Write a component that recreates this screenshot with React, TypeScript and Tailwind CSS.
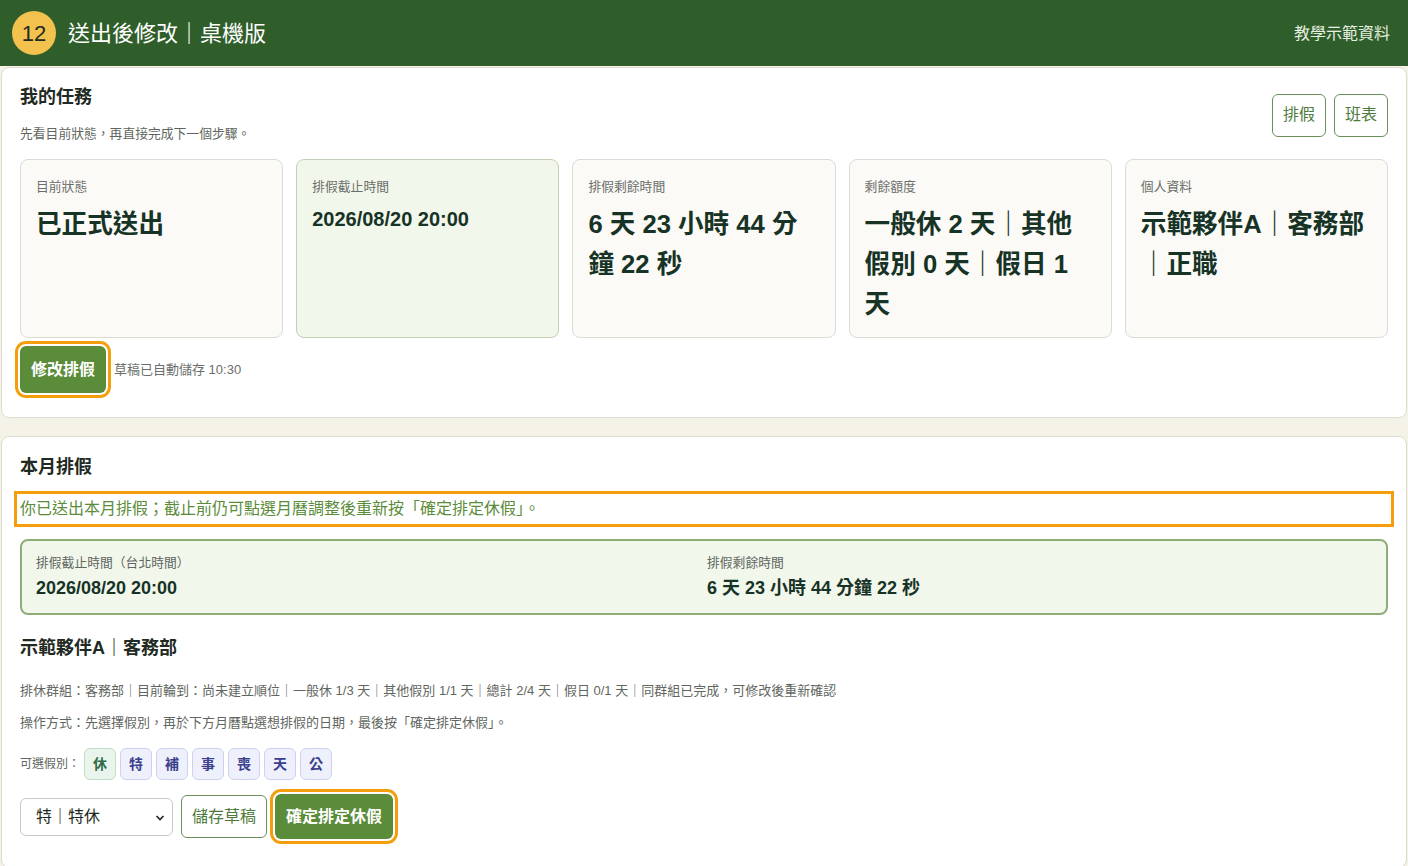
import React from 'react';

const font = { fontFamily: '"Liberation Sans", "Noto Sans CJK TC", sans-serif' };

const cards = [
  { label: '目前狀態', value: '已正式送出', hl: false, size: 'mt-[9px] text-[25.6px] leading-[40px]' },
  { label: '排假截止時間', value: '2026/08/20 20:00', hl: true, size: 'mt-[8px] text-[20px] leading-[32px]' },
  { label: '排假剩餘時間', value: '6 天 23 小時 44 分鐘 22 秒', hl: false, size: 'mt-[9px] text-[25.6px] leading-[40px]' },
  { label: '剩餘額度', value: '一般休 2 天｜其他假別 0 天｜假日 1 天', hl: false, size: 'mt-[9px] text-[25.6px] leading-[40px]' },
  { label: '個人資料', value: '示範夥伴A｜客務部｜正職', hl: false, size: 'mt-[9px] text-[25.6px] leading-[40px]' },
];

const leaveTypes = ['休', '特', '補', '事', '喪', '天', '公'];

export default function App() {
  return (
    <div className="min-h-[866px] bg-[#f5f3e8] text-[#1f2a22]" style={font}>
      {/* header */}
      <header className="h-[66px] bg-[#2f5e2b] flex items-center justify-between pl-3 pr-[18px]">
        <div className="flex items-center gap-3">
          <div className="w-11 h-11 rounded-full bg-[#f2c14e] flex items-center justify-center text-[22px] text-[#1f2a22]">
            12
          </div>
          <h1 className="text-[22px] text-white">送出後修改｜桌機版</h1>
        </div>
        <div className="text-[16px] text-[#e6efe0] mt-[2px]">教學示範資料</div>
      </header>

      {/* my tasks */}
      <section className="mx-px mt-px bg-white border border-[#dedbd0] rounded-lg px-[18px] pt-[17px] pb-6">
        <div className="flex items-center justify-between">
          <div>
            <h2 className="text-[18px] leading-6 font-bold">我的任務</h2>
            <p className="mt-4 text-[12.8px] leading-[18px] text-[#5f6660]">先看目前狀態，再直接完成下一個步驟。</p>
          </div>
          <div className="flex gap-2 mt-[2px]">
            <button className="h-[43px] px-[10px] rounded-md border border-[#6b8f5a] text-[#4f7a3c] text-[16px] bg-white">排假</button>
            <button className="h-[43px] px-[10px] rounded-md border border-[#6b8f5a] text-[#4f7a3c] text-[16px] bg-white">班表</button>
          </div>
        </div>

        <div className="mt-4 grid grid-cols-5 gap-[13px]">
          {cards.map((c) => (
            <div
              key={c.label}
              className={
                'h-[179px] rounded-lg border px-[15px] pt-[19px] ' +
                (c.hl ? 'bg-[#f2f7ec] border-[#c3d0b6]' : 'bg-[#fbfaf7] border-[#dcdcd6]')
              }
            >
              <div className="text-[12.8px] leading-4 text-[#6b6f6b]">{c.label}</div>
              <div className={'font-bold text-[#173326] ' + c.size}>{c.value}</div>
            </div>
          ))}
        </div>

        <div className="mt-2 flex items-center gap-2">
          <button className="h-[47px] w-[86px] rounded-md bg-[#5b8c3a] text-white text-[16px] font-bold outline-3 outline-offset-2 outline-[#f59e0b]">
            修改排假
          </button>
          <span className="text-[13px] text-[#6b6f6b]">草稿已自動儲存 10:30</span>
        </div>
      </section>

      {/* this month */}
      <section className="mx-px mt-[18px] bg-white border border-[#dedbd0] rounded-lg px-[18px] pt-[18px] pb-[28px]">
        <h2 className="text-[18px] leading-6 font-bold">本月排假</h2>

        <p className="mt-[18px] text-[16px] leading-6 text-[#5b8c3a] outline-3 outline-offset-3 outline-[#f59e0b]">
          你已送出本月排假；截止前仍可點選月曆調整後重新按「確定排定休假」。
        </p>

        <div className="mt-[18px] h-[76px] rounded-lg border-2 border-[#8fae76] bg-[#f2f7ec] grid grid-cols-2 gap-x-[6px] px-[14px] pt-[12px]">
          <div>
            <div className="text-[12.8px] leading-5 text-[#5f6660]">排假截止時間（台北時間）</div>
            <div className="mt-[3px] text-[18px] leading-6 font-bold text-[#173326]">2026/08/20 20:00</div>
          </div>
          <div>
            <div className="text-[12.8px] leading-5 text-[#5f6660]">排假剩餘時間</div>
            <div className="mt-[3px] text-[18px] leading-6 font-bold text-[#173326]">6 天 23 小時 44 分鐘 22 秒</div>
          </div>
        </div>

        <h3 className="mt-[21px] text-[18px] leading-6 font-bold">示範夥伴A｜客務部</h3>

        <p className="mt-[21px] text-[13px] leading-5 text-[#5f6660]">
          排休群組：客務部｜目前輪到：尚未建立順位｜一般休 1/3 天｜其他假別 1/1 天｜總計 2/4 天｜假日 0/1 天｜同群組已完成，可修改後重新確認
        </p>
        <p className="mt-3 text-[13px] leading-5 text-[#5f6660]">
          操作方式：先選擇假別，再於下方月曆點選想排假的日期，最後按「確定排定休假」。
        </p>

        <div className="mt-[15px] flex items-center gap-1">
          <span className="text-[12px] text-[#5f6660]">可選假別：</span>
          {leaveTypes.map((t, i) => (
            <span
              key={t}
              className={
                'w-8 h-8 rounded-md border flex items-center justify-center text-[14px] font-bold ' +
                (i === 0
                  ? 'bg-[#e9f5ec] border-[#bfdcc6] text-[#2f6b47]'
                  : 'bg-[#eef0fb] border-[#cdd0f0] text-[#3b3f8c]')
              }
            >
              {t}
            </span>
          ))}
        </div>

        <div className="mt-[14px] flex items-center gap-2">
          <div className="relative w-[153px] h-[38px] rounded-md border border-[#c9c9c9] bg-white flex items-center pl-[15px] text-[16px]">
            特｜特休
            <svg className="absolute right-[7px] top-[15px]" width="10" height="8" viewBox="0 0 10 8">
              <path d="M1.5 2 L5 5.5 L8.5 2" fill="none" stroke="#222" strokeWidth="1.6" />
            </svg>
          </div>
          <button className="h-[43px] px-[10px] rounded-md border border-[#6b8f5a] bg-white text-[#4f7a3c] text-[16px]">
            儲存草稿
          </button>
          <button className="h-[45px] px-[11px] rounded-md bg-[#5b8c3a] text-white text-[16px] font-bold outline-3 outline-offset-2 outline-[#f59e0b]">
            確定排定休假
          </button>
        </div>
      </section>
    </div>
  );
}
